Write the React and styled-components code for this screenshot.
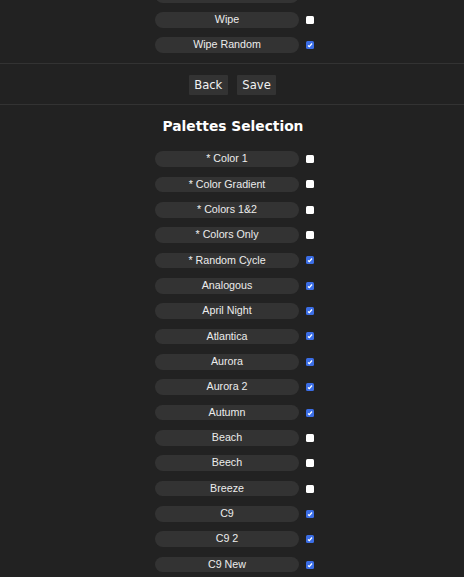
import React from "react";
import styled, { createGlobalStyle } from "styled-components";

const GlobalStyle = createGlobalStyle`
  html, body {
    margin: 0;
    padding: 0;
    background: #222222;
    overflow: hidden;
  }
  body {
    font-family: "Liberation Sans", Arial, sans-serif;
    color: #e8e8e8;
  }
`;

const Page = styled.div`
  width: 464px;
  height: 577px;
  overflow: hidden;
  background: #222222;
`;

const Section = styled.section`
  display: flex;
  flex-direction: column;
  align-items: center;
  padding: ${(p) => p.$pad || "0"};
  margin-top: ${(p) => p.$offset || "0"};
  border-bottom: ${(p) => (p.$divider ? "1px solid #333333" : "none")};
`;

const List = styled.div`
  display: flex;
  flex-direction: column;
  gap: 9.55px;
`;

const Row = styled.label`
  display: flex;
  align-items: center;
  gap: 7px;
  padding-left: 5px;
`;

const Pill = styled.span`
  width: 144px;
  height: 15.8px;
  border-radius: 8px;
  background: #333333;
  color: #ececec;
  font-size: 10.7px;
  line-height: 15.8px;
  text-align: center;
  white-space: nowrap;
`;

const Box = styled.span`
  width: 8px;
  height: 8px;
  border-radius: 1.5px;
  background: ${(p) => (p.$checked ? "#3b6ee6" : "#ffffff")};
  display: flex;
  align-items: center;
  justify-content: center;
`;

const Buttons = styled.div`
  display: flex;
  gap: 9px;
  padding-left: 1px;
`;

const Button = styled.button`
  height: 20px;
  padding: 0 5.5px;
  border: none;
  border-radius: 1px;
  background: #333333;
  color: #f2f2f2;
  font-family: "DejaVu Sans", Verdana, sans-serif;
  font-size: 11.6px;
  line-height: 20px;
  cursor: pointer;
`;

const Title = styled.h2`
  margin: 0 0 16px;
  padding-left: 2px;
  font-family: "DejaVu Sans", Verdana, sans-serif;
  font-weight: bold;
  font-size: 13.8px;
  line-height: 17px;
  color: #ffffff;
`;

function Check({ checked }) {
  return (
    <Box $checked={checked}>
      {checked && (
        <svg width="6" height="6" viewBox="0 0 6 6">
          <path d="M1 3.4 L2.3 4.6 L5 1.5" fill="none" stroke="#fff" strokeWidth="1.3" />
        </svg>
      )}
    </Box>
  );
}

function Option({ label, checked }) {
  return (
    <Row>
      <Pill>{label}</Pill>
      <Check checked={checked} />
    </Row>
  );
}

const effects = [
  { label: "Wave", checked: true },
  { label: "Wipe", checked: false },
  { label: "Wipe Random", checked: true },
];

const palettes = [
  ["* Color 1", false],
  ["* Color Gradient", false],
  ["* Colors 1&2", false],
  ["* Colors Only", false],
  ["* Random Cycle", true],
  ["Analogous", true],
  ["April Night", true],
  ["Atlantica", true],
  ["Aurora", true],
  ["Aurora 2", true],
  ["Autumn", true],
  ["Beach", false],
  ["Beech", false],
  ["Breeze", false],
  ["C9", true],
  ["C9 2", true],
  ["C9 New", true],
];

export default function App() {
  return (
    <Page>
      <GlobalStyle />
      <Section $offset="-13.3px" $pad="0 0 10px" $divider>
        <List>
          {effects.map((e) => (
            <Option key={e.label} label={e.label} checked={e.checked} />
          ))}
        </List>
      </Section>
      <Section $pad="11px 0 9px" $divider>
        <Buttons>
          <Button>Back</Button>
          <Button>Save</Button>
        </Buttons>
      </Section>
      <Section $pad="13px 0 0">
        <Title>Palettes Selection</Title>
        <List>
          {palettes.map(([label, checked]) => (
            <Option key={label} label={label} checked={checked} />
          ))}
        </List>
      </Section>
    </Page>
  );
}
